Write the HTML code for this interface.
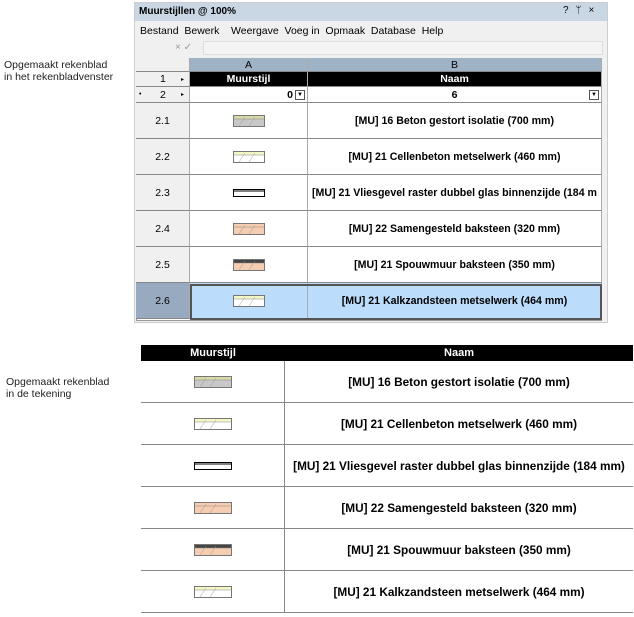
<!DOCTYPE html>
<html><head><style>
*{margin:0;padding:0;box-sizing:border-box}
body{width:634px;height:617px;background:#fff;position:relative;font-family:"Liberation Sans",sans-serif;overflow:hidden}
.a{position:absolute}
.lbl{font-size:10.5px;color:#222;line-height:12px}
.win{left:134px;top:2px;width:474px;height:321px;background:#f0f0f0;border:1px solid #ccc}
.cell{position:absolute;border-right:1px solid #aaa;border-bottom:1px solid #888;display:flex;align-items:center;justify-content:center;font-size:10.5px}
.b{font-weight:bold;font-size:10.5px}
</style></head><body>
<div class="a lbl" style="left:4px;top:59px">Opgemaakt rekenblad<br>in het rekenbladvenster</div>
<div class="a lbl" style="left:6px;top:376px">Opgemaakt rekenblad<br>in de tekening</div>

<div class="a win"></div>
<div class="a" style="left:135px;top:3px;width:472px;height:18px;background:#c9d6e3"></div>
<div class="a b" style="left:139px;top:6px;font-size:10px">Muurstijllen @ 100%</div>
<div class="a" style="left:563px;top:5px;font-size:10px;letter-spacing:7px">?ᛘ×</div>
<div class="a" style="left:140px;top:25px;font-size:10.5px;word-spacing:0">Bestand&nbsp; Bewerk&nbsp;&nbsp;&nbsp; Weergave&nbsp; Voeg in&nbsp; Opmaak&nbsp; Database&nbsp; Help</div>
<div class="a" style="left:175px;top:42px;font-size:10px;color:#999">× ✓</div>
<div class="a" style="left:203px;top:41px;width:400px;height:14px;background:#f4f4f4;border:1px solid #ddd"></div>

<div class="a" style="left:136px;top:58px;width:466px;height:263px;background:#fff;border:1px solid #999"></div>
<div class="cell" style="left:136px;top:58px;width:54px;height:14px;background:#f0f0f0"></div>
<div class="cell" style="left:190px;top:58px;width:118px;height:14px;background:#9fb3c7">A</div>
<div class="cell" style="left:308px;top:58px;width:294px;height:14px;background:#9fb3c7">B</div>
<div class="cell" style="left:136px;top:72px;width:54px;height:15px;background:#f0f0f0;justify-content:flex-start;padding-left:24px">1<span style="position:absolute;right:5px;font-size:6px">▸</span></div>
<div class="cell b" style="left:190px;top:72px;width:118px;height:15px;background:#000;color:#fff">Muurstijl</div>
<div class="cell b" style="left:308px;top:72px;width:294px;height:15px;background:#000;color:#fff">Naam</div>
<div class="cell" style="left:136px;top:87px;width:54px;height:16px;background:#f0f0f0;justify-content:flex-start;padding-left:24px"><span style="position:absolute;left:3px;font-size:7px">•</span>2<span style="position:absolute;right:5px;font-size:6px">▸</span></div>
<div class="cell b" style="left:190px;top:87px;width:118px;height:16px;justify-content:flex-end;padding-right:2px">0<span style="display:inline-block;width:10px;height:10px;border:1px solid #555;margin-left:2px;font-size:6px;text-align:center;line-height:9px">▼</span></div>
<div class="cell b" style="left:308px;top:87px;width:294px;height:16px">6<span style="position:absolute;right:2px;display:inline-block;width:10px;height:10px;border:1px solid #555;font-size:6px;text-align:center;line-height:9px">▼</span></div>

<div id="rows"></div>
<div id="rows2"></div>
<div class="a" style="left:141px;top:345px;width:492px;height:16px;background:#000"></div>
<div class="a b" style="left:141px;top:347px;width:144px;text-align:center;color:#fff;font-size:11px">Muurstijl</div>
<div class="a b" style="left:285px;top:347px;width:348px;text-align:center;color:#fff;font-size:11px">Naam</div>
<script>
var names=["[MU] 16 Beton gestort isolatie (700 mm)","[MU] 21 Cellenbeton metselwerk (460 mm)","[MU] 21 Vliesgevel raster dubbel glas binnenzijde (184 m","[MU] 22 Samengesteld baksteen (320 mm)","[MU] 21 Spouwmuur baksteen (350 mm)","[MU] 21 Kalkzandsteen metselwerk (464 mm)"];
var fills=[["#c8c8c8","#d8d8a8"],["#fff","#f4f7c8"],["#fff","#fff"],["#f6cdb0","#f6cdb0"],["#f6cdb0","#444"],["#fff","#f4f7c8"]];
function icon(i,w){var f=fills[i];
if(i==2)return '<svg width="'+w+'" height="10"><rect x="0.5" y="1.5" width="'+(w-1)+'" height="7" fill="#fff" stroke="#000"/><line x1="0" y1="3" x2="'+w+'" y2="3" stroke="#000"/></svg>';
return '<svg width="'+w+'" height="12"><rect x="0.5" y="0.5" width="'+(w-1)+'" height="11" fill="'+f[0]+'" stroke="#777"/><rect x="1" y="1" width="'+(w-2)+'" height="3" fill="'+f[1]+'"/><line x1="1" y1="4" x2="'+(w-1)+'" y2="4" stroke="#888" stroke-width=".6"/><path d="M6 11 L12 2 M16 11 L22 2" stroke="#999" stroke-width=".5"/></svg>';}
var h='';
for(var i=0;i<6;i++){var t=103+i*36,sel=i==5;
h+='<div class="cell" style="left:136px;top:'+t+'px;width:54px;height:36px;background:'+(sel?'#97aac0':'#f0f0f0')+'">2.'+(i+1)+'</div>';
h+='<div class="cell" style="left:190px;top:'+t+'px;width:118px;height:36px;background:'+(sel?'#bcdcfc':'#fff')+'">'+icon(i,32)+'</div>';
h+='<div class="cell b" style="left:308px;top:'+t+'px;width:294px;height:36px;white-space:nowrap;overflow:hidden;font-size:10.6px;background:'+(sel?'#bcdcfc':'#fff')+'">'+names[i]+'</div>';}
h+='<div class="a" style="left:190px;top:284px;width:412px;height:36px;border:2px solid #555"></div>';
document.getElementById('rows').innerHTML=h;
var g='';names[2]="[MU] 21 Vliesgevel raster dubbel glas binnenzijde (184 mm)";
for(var i=0;i<6;i++){var t=361+i*42;
g+='<div class="cell" style="left:141px;top:'+t+'px;width:144px;height:42px;border-right:1px solid #888">'+icon(i,38)+'</div>';
g+='<div class="cell b" style="left:285px;top:'+t+'px;width:348px;height:42px;border-right:none;font-size:11.8px;white-space:nowrap">'+names[i]+'</div>';}
document.getElementById('rows2').innerHTML=g;
</script>
</body></html>
